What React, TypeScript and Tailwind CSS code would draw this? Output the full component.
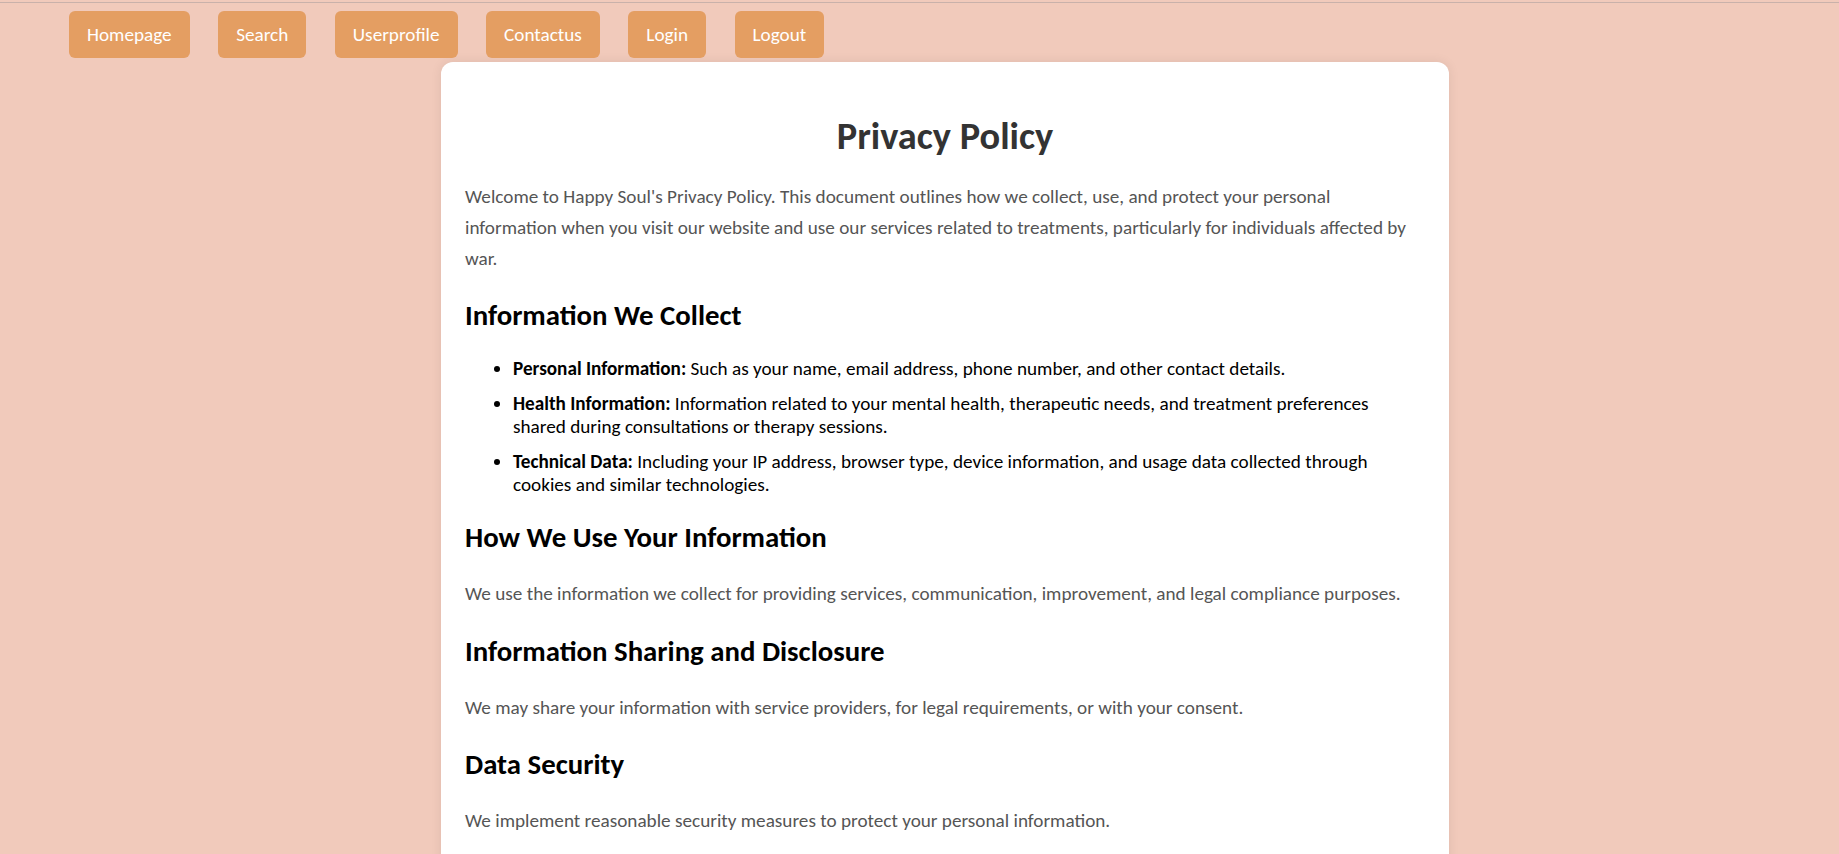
import React from 'react';

const navLinks = ['Homepage', 'Search', 'Userprofile', 'Contactus', 'Login', 'Logout'];

const collected = [
  {
    label: 'Personal Information:',
    text: 'Such as your name, email address, phone number, and other contact details.',
  },
  {
    label: 'Health Information:',
    text: 'Information related to your mental health, therapeutic needs, and treatment preferences shared during consultations or therapy sessions.',
  },
  {
    label: 'Technical Data:',
    text: 'Including your IP address, browser type, device information, and usage data collected through cookies and similar technologies.',
  },
];

const sections = [
  {
    title: 'How We Use Your Information',
    body: 'We use the information we collect for providing services, communication, improvement, and legal compliance purposes.',
  },
  {
    title: 'Information Sharing and Disclosure',
    body: 'We may share your information with service providers, for legal requirements, or with your consent.',
  },
  {
    title: 'Data Security',
    body: 'We implement reasonable security measures to protect your personal information.',
  },
];

export default function App() {
  return (
    <div className="min-h-screen bg-[#f1cabb] pt-[2px] pb-10 font-['Carlito','Lato',sans-serif]">
      <div className="h-px bg-[#c9b1aa]" />

      <nav className="mt-[8px] flex gap-[28.5px] pl-[69px]">
        {navLinks.map((link) => (
          <a
            key={link}
            href="#"
            className="rounded-[6px] bg-[#e49e62] px-[18px] pt-[12px] pb-[11px] text-[19.2px] leading-[24px] text-white"
          >
            {link}
          </a>
        ))}
      </nav>

      <main className="mt-[4px] ml-[441px] w-[1008px] rounded-[12px] bg-white px-[24px] pt-[51px] pb-[60px] shadow-[0_0_12px_rgba(0,0,0,0.08)]">
        <h1 className="mb-[22px] text-center text-[38.4px] leading-[46px] font-bold text-[#333]">Privacy Policy</h1>
        <p className="text-[19.2px] leading-[31px] text-[#555]">
          Welcome to Happy Soul's Privacy Policy. This document outlines how we collect, use, and protect your personal
          information when you visit our website and use our services related to treatments, particularly for individuals
          affected by war.
        </p>

        <h2 className="mt-[24px] mb-[23.5px] text-[28.8px] leading-[35px] font-bold text-black">Information We Collect</h2>
        <ul className="list-disc pl-[48px] text-[19.2px] leading-[23px] text-black">
          {collected.map((item) => (
            <li key={item.label} className="mb-[12px] last:mb-0">
              <strong>{item.label}</strong> {item.text}
            </li>
          ))}
        </ul>

        {sections.map((s) => (
          <section key={s.title}>
            <h2 className="mt-[24.5px] mb-[23px] text-[28.8px] leading-[35px] font-bold text-black">{s.title}</h2>
            <p className="text-[19.2px] leading-[31px] text-[#555]">{s.body}</p>
          </section>
        ))}
      </main>
    </div>
  );
}
